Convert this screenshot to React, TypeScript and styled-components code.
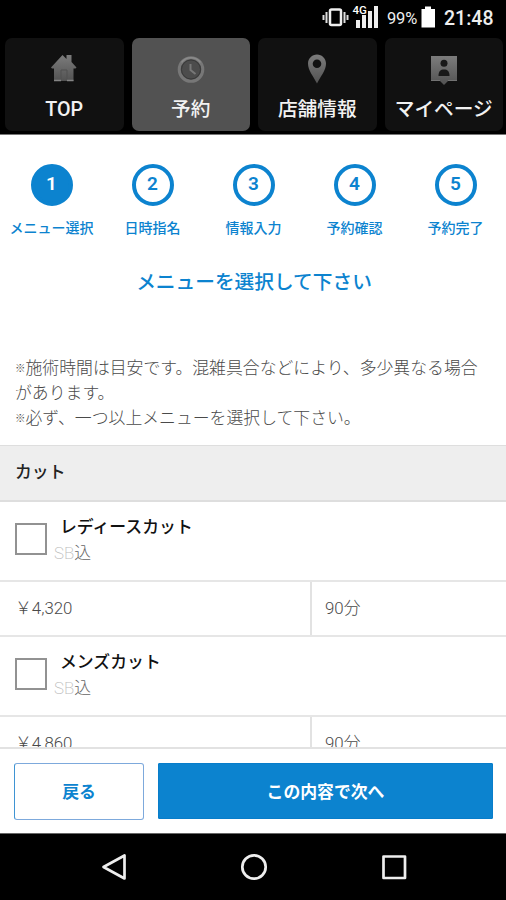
import React from "react";
import styled, { createGlobalStyle } from "styled-components";

const BLUE = "#0c83cf";

const GlobalStyle = createGlobalStyle`
  * { box-sizing: border-box; }
  body {
    margin: 0;
    background: #fff;
    font-family: Roboto, "Noto Sans CJK JP", sans-serif;
  }
`;

const Screen = styled.div`
  width: 506px;
  height: 900px;
  display: flex;
  flex-direction: column;
  overflow: hidden;
  background: #fff;
`;

const StatusBar = styled.div`
  height: 38px;
  flex: none;
  background: #000;
  color: #eee;
  display: flex;
  justify-content: flex-end;
  padding: 0 12px 0 0;
  line-height: 37px;
`;

const StatusIcons = styled.svg`
  width: 57px;
  height: 38px;
`;

const BatteryPercent = styled.span`
  width: 34px;
  margin-left: 8px;
  font-size: 16.5px;
  letter-spacing: -0.2px;
  white-space: nowrap;
`;

const BatteryIcon = styled.svg`
  width: 15px;
  height: 38px;
`;

const Clock = styled.span`
  width: 50px;
  margin-left: 8px;
  font-size: 19.5px;
  font-weight: 500;
  white-space: nowrap;
`;

const TabBar = styled.nav`
  height: 97px;
  flex: none;
  display: grid;
  grid-template-columns: repeat(4, 1fr);
  column-gap: 8px;
  padding: 0 3px 3px 5px;
  background: #000;
  border-bottom: 1px solid #777;
`;

const Tab = styled.button<{ $active?: boolean }>`
  border: 0;
  border-radius: 7px;
  padding: 11px 0 0;
  background: ${(p) => (p.$active ? "#525252" : "#111")};
  color: #f2f2f2;
  font: 500 19.7px/28px Roboto, "Noto Sans CJK JP", sans-serif;
  display: flex;
  flex-direction: column;
  align-items: center;
  gap: 9px;
  white-space: nowrap;
`;

const TabIcon = styled.svg`
  width: 38px;
  height: 38px;
  flex: none;
`;

const Content = styled.main`
  flex: 1;
  min-height: 0;
  overflow: hidden;
`;

const Steps = styled.ol`
  list-style: none;
  margin: 0;
  padding: 28.5px 0 0 1px;
  display: grid;
  grid-template-columns: repeat(5, 1fr);
`;

const Step = styled.li`
  display: flex;
  flex-direction: column;
  align-items: center;
  color: ${BLUE};
  font-size: 14px;
  line-height: 20px;
  font-weight: 500;
  white-space: nowrap;
`;

const StepNumber = styled.span<{ $active?: boolean }>`
  width: 42px;
  height: 42px;
  margin-bottom: 12px;
  border: 4px solid ${BLUE};
  border-radius: 50%;
  background: ${(p) => (p.$active ? BLUE : "#fff")};
  color: ${(p) => (p.$active ? "#fff" : BLUE)};
  font-size: 19px;
  font-weight: 600;
  line-height: 32px;
  text-align: center;
`;

const Title = styled.h1`
  margin: 30px 0 0;
  padding-left: 2px;
  color: ${BLUE};
  font-size: 19.7px;
  line-height: 30px;
  font-weight: 500;
  text-align: center;
`;

const Notes = styled.div`
  margin: 58px 0 0;
  padding: 0 13px 0 15px;
  height: 89px;
  color: #4a4a4a;
  font-size: 16.85px;
  line-height: 25.3px;
  font-weight: 300;
`;

const NoteMark = styled.span`
  font-size: 10.5px;
  vertical-align: 2px;
  line-height: 1;
`;

const SectionHeader = styled.h2`
  margin: 0;
  height: 57px;
  padding: 0 15px;
  border: solid #dedede;
  border-width: 1px 0 2px;
  background: #eee;
  color: #222;
  font-size: 16.85px;
  font-weight: 500;
  line-height: 53px;
`;

const MenuHead = styled.label`
  height: 78px;
  display: flex;
  padding: 11px 15px 0;
`;

const Checkbox = styled.span`
  width: 32px;
  height: 32px;
  margin: 10px 7px 0 0;
  border: 2px solid #929292;
  flex: none;
`;

const MenuName = styled.div`
  padding-left: 6px;
  color: #111;
  font-size: 16.85px;
  font-weight: 500;
  line-height: 28px;
`;

const MenuNote = styled.div`
  color: #666;
  font-size: 16.85px;
  font-weight: 300;
  line-height: 25px;
`;

const NoteLatin = styled.span`
  color: #bbb;
  font-weight: 200;
`;

const MenuDetails = styled.div`
  display: flex;
  height: 57px;
  border: solid #e6e6e6;
  border-width: 2px 0;
  color: #4a4a4a;
  font-size: 16.85px;
  font-weight: 300;
  line-height: 52px;
`;

const Price = styled.div`
  width: 312px;
  padding-left: 15px;
  border-right: 2px solid #e2e2e2;
`;

const Duration = styled.div`
  padding-left: 13px;
`;

const ActionBar = styled.footer`
  height: 86px;
  flex: none;
  display: flex;
  gap: 14px;
  padding: 14px 13px 0 14px;
  border-top: 2px solid #e2e2e2;
`;

const ActionButton = styled.button<{ $primary?: boolean }>`
  width: ${(p) => (p.$primary ? "335px" : "130px")};
  height: ${(p) => (p.$primary ? "56px" : "57px")};
  flex: none;
  padding: 1px 0 0;
  border: 1px solid ${(p) => (p.$primary ? "#087dca" : "#7da9dc")};
  border-left-color: ${(p) => (p.$primary ? "#087dca" : "#3f94d3")};
  border-radius: ${(p) => (p.$primary ? "1px" : "3px")};
  background: ${(p) => (p.$primary ? BLUE : "#fff")};
  color: ${(p) => (p.$primary ? "#fff" : BLUE)};
  font: 700 16.85px/24px Roboto, "Noto Sans CJK JP", sans-serif;
`;

const SystemBar = styled.div`
  height: 67px;
  flex: none;
  background: #000;
  border-top: 1px solid #666;
  display: flex;
  justify-content: center;
  align-items: center;
  gap: 110px;
  padding-left: 1px;
`;

const SystemIcon = styled.svg`
  width: 30px;
  height: 30px;
  fill: none;
  stroke: #eee;
  stroke-width: 2.7;
  stroke-linejoin: round;
`;

const steps = ["メニュー選択", "日時指名", "情報入力", "予約確認", "予約完了"];
const menus = [
  { name: "レディースカット", price: "4,320", minutes: "90" },
  { name: "メンズカット", price: "4,860", minutes: "90" },
];

function Gradient({ id }: { id: string }) {
  return (
    <linearGradient id={id} x1="0" y1="0" x2="0" y2="1">
      <stop offset="0" stopColor="#7c7c7c" />
      <stop offset="1" stopColor="#525252" />
    </linearGradient>
  );
}

function HomeIcon() {
  return (
    <TabIcon viewBox="0 0 38 38">
      <defs><Gradient id="home" /></defs>
      <path fill="url(#home)" d="M6 18.5 17.5 6l4 4V6h5v7l5 5.5-1 1h-2V32H9V19.5H7z" />
      <path stroke="#505050" fill="none" d="M16 31V21h6v10" />
      <path stroke="#858585" strokeWidth="1.5" d="M9 31.5h7M22 31.5h6.500" />
    </TabIcon>
  );
}

function ClockIcon() {
  return (
    <TabIcon viewBox="0 0 38 38">
      <circle cx="19" cy="20.5" r="11.8" fill="#4c4c4c" stroke="#777" strokeWidth="3" />
      <circle cx="19" cy="20.5" r="9.5" fill="none" stroke="#383838" />
      <path d="M9.500 13.500a12 12 0 0 1 19 0" fill="none" stroke="#8b8b8b" strokeWidth="1.5" />
      <path d="M18.500 15v6l5 4" fill="none" stroke="#777" strokeWidth="2" />
    </TabIcon>
  );
}

function PinIcon() {
  return (
    <TabIcon viewBox="0 0 38 38">
      <defs><Gradient id="pin" /></defs>
      <path fill="url(#pin)" fillRule="evenodd" d="M19 5.5c-5 0-9 4-9 9 0 7 5 12 9 20 4-8 9-13 9-20 0-5-4-9-9-9zm0 5a4.3 4.3 0 1 1 0 8.6 4.3 4.3 0 0 1 0-8.6z" />
    </TabIcon>
  );
}

function ProfileIcon() {
  return (
    <TabIcon viewBox="0 0 38 38">
      <defs><Gradient id="profile" /></defs>
      <path fill="url(#profile)" d="M6 7h26v25h-9l-4 4-4-4H6z" />
      <circle cx="19" cy="14.3" r="3.5" fill="#191919" />
      <path fill="#191919" d="M13.500 27c0-5 2-6.500 5.500-6.500s5.500 1.500 5.500 6.500z" />
      <path stroke="#737373" d="M6 31.5h9M23 31.5h9" />
    </TabIcon>
  );
}

export default function App() {
  return (
    <>
      <GlobalStyle />
      <Screen>
        <StatusBar>
          <StatusIcons viewBox="0 0 57 38">
            <rect x="8" y="9.5" width="11" height="15.5" rx="1.5" fill="none" stroke="#eee" strokeWidth="2.5" />
            <path d="M4.5 12v11M22.5 12v11M1.5 15v5M25.5 15v5" stroke="#ddd" strokeWidth="2" />
            <path fill="#eee" d="M34 20h4v8h-4zM40 15h4v13h-4zM46 11h4v17h-4zM52 6h4v22h-4z" />
            <text x="30.500" y="14" fill="#fff" stroke="#000" strokeWidth="1.500" paintOrder="stroke" fontSize="11.500" fontWeight="500" fontFamily="Roboto, sans-serif">4G</text>
          </StatusIcons>
          <BatteryPercent>99%</BatteryPercent>
          <BatteryIcon viewBox="0 0 15 38">
            <path fill="#fff" d="M.5 9H4V6.500h6V9h4v18.5H.5z" />
          </BatteryIcon>
          <Clock>21:48</Clock>
        </StatusBar>
        <TabBar>
          <Tab><HomeIcon />TOP</Tab>
          <Tab $active><ClockIcon />予約</Tab>
          <Tab><PinIcon />店舗情報</Tab>
          <Tab><ProfileIcon />マイページ</Tab>
        </TabBar>
        <Content>
          <Steps>
            {steps.map((label, i) => (
              <Step key={label}>
                <StepNumber $active={i === 0}>{i + 1}</StepNumber>
                {label}
              </Step>
            ))}
          </Steps>
          <Title>メニューを選択して下さい</Title>
          <Notes>
            <NoteMark>※</NoteMark>施術時間は目安です。混雑具合などにより、多少異なる場合があります。
            <br />
            <NoteMark>※</NoteMark>必ず、一つ以上メニューを選択して下さい。
          </Notes>
          <SectionHeader>カット</SectionHeader>
          {menus.map((menu) => (
            <React.Fragment key={menu.name}>
              <MenuHead>
                <Checkbox />
                <div>
                  <MenuName>{menu.name}</MenuName>
                  <MenuNote><NoteLatin>SB</NoteLatin>込</MenuNote>
                </div>
              </MenuHead>
              <MenuDetails>
                <Price>￥{menu.price}</Price>
                <Duration>{menu.minutes}分</Duration>
              </MenuDetails>
            </React.Fragment>
          ))}
        </Content>
        <ActionBar>
          <ActionButton>戻る</ActionButton>
          <ActionButton $primary>この内容で次へ</ActionButton>
        </ActionBar>
        <SystemBar>
          <SystemIcon viewBox="0 0 30 30"><path d="M25.5 3.5v23L4.5 15z" /></SystemIcon>
          <SystemIcon viewBox="0 0 30 30"><circle cx="15" cy="15" r="11.7" /></SystemIcon>
          <SystemIcon viewBox="0 0 30 30"><rect x="4.5" y="4.5" width="21.5" height="21.5" /></SystemIcon>
        </SystemBar>
      </Screen>
    </>
  );
}
